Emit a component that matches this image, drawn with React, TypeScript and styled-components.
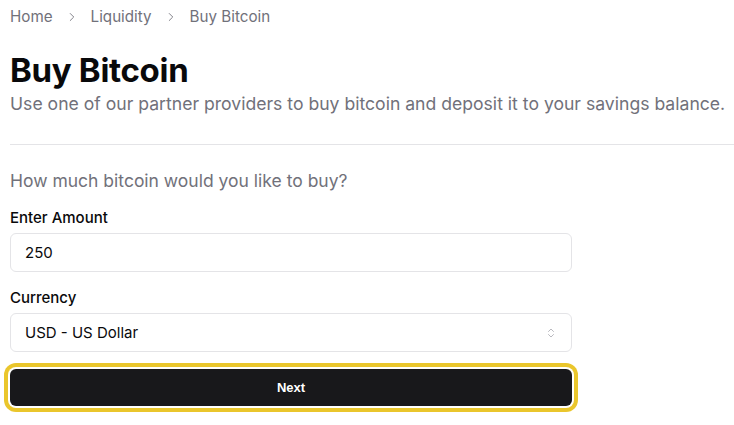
import React from "react";
import styled, { createGlobalStyle } from "styled-components";
import { ChevronRight, ChevronsUpDown } from "lucide-react";

const GlobalStyle = createGlobalStyle`
  * { box-sizing: border-box; }
  body {
    margin: 0;
    background: #fff;
    font-family: Inter, "Noto Sans", sans-serif;
    color: #09090b;
  }
`;

const Page = styled.main`
  padding: 7px 0 20px 10px;
`;

const Crumbs = styled.nav`
  display: flex;
  align-items: center;
  gap: 12px;
  font-size: 15.2px;
  line-height: 20px;
  color: #71717a;
`;

const Header = styled.header`
  margin-top: 23px;
  padding-bottom: 27px;
  border-bottom: 1px solid #e4e4e7;
`;

const Title = styled.h1`
  margin: 0;
  font-size: 33px;
  line-height: 40px;
  font-weight: 700;
  letter-spacing: -0.3px;
`;

const Subtitle = styled.p`
  margin: 1px 0 0;
  font-size: 17.6px;
  line-height: 26px;
  color: #71717a;
  white-space: nowrap;
`;

const Form = styled.form`
  max-width: 562px;
  padding-top: 23px;
  display: flex;
  flex-direction: column;
`;

const Question = styled.p`
  margin: 0 0 14px;
  font-size: 17.5px;
  line-height: 26px;
  color: #71717a;
`;

const Field = styled.div`
  display: flex;
  flex-direction: column;
  gap: 5px;
  margin-bottom: 16px;
`;

const Label = styled.label`
  font-size: 15px;
  line-height: 20px;
  font-weight: 500;
`;

const Box = styled.div`
  height: 39px;
  display: flex;
  align-items: center;
  justify-content: space-between;
  padding: 0 14px;
  border: 1px solid #e4e4e7;
  border-radius: 6px;
  font-size: 15px;
  color: #09090b;
  svg { color: #a1a1aa; }
`;

const NextButton = styled.button`
  margin-top: 1px;
  height: 37px;
  border: none;
  border-radius: 6px;
  background: #18181b;
  color: #fff;
  font-family: "Liberation Sans", Arial, sans-serif;
  font-size: 13px;
  font-weight: 700;
  box-shadow: 0 0 0 2px #fff, 0 0 0 6px #eac62c;
`;

export default function App() {
  return (
    <Page>
      <GlobalStyle />
      <Crumbs>
        <span>Home</span>
        <ChevronRight size={14} strokeWidth={1.5} />
        <span>Liquidity</span>
        <ChevronRight size={14} strokeWidth={1.5} />
        <span>Buy Bitcoin</span>
      </Crumbs>
      <Header>
        <Title>Buy Bitcoin</Title>
        <Subtitle>
          Use one of our partner providers to buy bitcoin and deposit it to your savings balance.
        </Subtitle>
      </Header>
      <Form>
        <Question>How much bitcoin would you like to buy?</Question>
        <Field>
          <Label>Enter Amount</Label>
          <Box>250</Box>
        </Field>
        <Field>
          <Label>Currency</Label>
          <Box>
            USD - US Dollar
            <ChevronsUpDown size={12} strokeWidth={1.5} />
          </Box>
        </Field>
        <NextButton type="button">Next</NextButton>
      </Form>
    </Page>
  );
}
